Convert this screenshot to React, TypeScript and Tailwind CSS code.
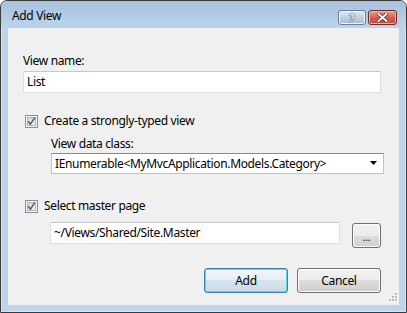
import React from "react";

const font = { fontFamily: '"Noto Sans", "Open Sans", sans-serif' };

function CheckBox() {
  return (
    <svg width="13" height="13" viewBox="0 0 13 13" className="shrink-0">
      <defs>
        <linearGradient id="cbg" x1="0" y1="0" x2="1" y2="1">
          <stop offset="0" stopColor="#d4d4d4" />
          <stop offset="1" stopColor="#f8f8f8" />
        </linearGradient>
      </defs>
      <rect x="0.5" y="0.5" width="12" height="12" fill="#f4f4f4" stroke="#8e8f8f" />
      <rect x="2.5" y="2.5" width="8" height="8" fill="url(#cbg)" stroke="#b5b5b5" />
      <path d="M3.2 6.2 L5.4 9.2 L9.8 2.6" fill="none" stroke="#4a5f97" strokeWidth="1.6" />
    </svg>
  );
}

export default function App() {
  return (
    <div className="w-[407px] h-[313px] bg-white tracking-[-0.35px]" style={font}>
      <div className="w-[407px] h-[313px] flex flex-col border border-[#3a3a3a] rounded-t-[7px] bg-[#bcd4ec] shadow-[inset_0_0_0_1px_#d8e6f4] overflow-hidden">
        <div className="h-[27px] shrink-0 flex items-start bg-gradient-to-b from-[#a7c0dd] to-[#bcd4ec] px-[11px]">
          <span className="mt-[7px] text-[12px] leading-[16px] text-black">Add View</span>
          <div className="ml-auto mt-[9px] mr-[-2px] flex gap-[2px]">
            <div className="w-[28px] h-[15px] rounded-[3px] border border-[#6d7f98] bg-gradient-to-b from-[#dde8f4] to-[#a5bad4] flex items-center justify-center shadow-[inset_0_0_0_1px_#eef4fa]">
              <span className="text-[11px] leading-[11px] font-bold text-white [text-shadow:0_0_1px_#2a3a50,0_0_1px_#2a3a50,0_0_1px_#2a3a50]">?</span>
            </div>
            <div className="w-[29px] h-[15px] rounded-[3px] border border-[#6e2d2a] bg-gradient-to-b from-[#e6a294] via-[#cf6152] to-[#c04a3e] flex items-center justify-center shadow-[inset_0_0_0_1px_#eeb2a6]">
              <svg width="11" height="9" viewBox="0 0 11 9">
                <path d="M1.5 1 L9.5 8 M9.5 1 L1.5 8" stroke="#5a2220" strokeWidth="3.6" strokeLinecap="round" />
                <path d="M1.5 1 L9.5 8 M9.5 1 L1.5 8" stroke="#ffffff" strokeWidth="2" strokeLinecap="round" />
              </svg>
            </div>
          </div>
        </div>
        <div className="mx-[7px] h-[277px] shrink-0 bg-[#f0f0f0] relative text-[12px] leading-[16px] text-black">
          <div className="flex flex-col pl-[15px] pt-[25px]">
            <div className="h-[16px]">View name:</div>
            <div className="mt-[2px] w-[358px] h-[22px] bg-white border border-[#dadde2] border-t-[#c4c7cc] flex items-center pl-[3px]">List</div>
            <div className="mt-[20px] h-[16px] flex items-center gap-[6px] pl-[2px]">
              <CheckBox />
              <span>Create a strongly-typed view</span>
            </div>
            <div className="pl-[28px] flex flex-col">
              <div className="mt-[7px] h-[16px]">View data class:</div>
              <div className="mt-[1px] w-[333px] h-[21px] bg-white border border-[#a9c7e6] border-t-[#5b95c9] flex items-center pl-[3px] pr-[4px]">
                <span>IEnumerable&lt;MyMvcApplication.Models.Category&gt;</span>
                <svg width="8" height="5" viewBox="0 0 8 5" className="ml-auto mr-[1px]">
                  <path d="M0 0 H7 L3.5 4 Z" fill="#000" />
                </svg>
              </div>
            </div>
            <div className="mt-[24px] h-[16px] flex items-center gap-[6px] pl-[2px]">
              <CheckBox />
              <span>Select master page</span>
            </div>
            <div className="pl-[27px] mt-[8px] flex items-start">
              <div className="w-[290px] h-[22px] bg-white border border-[#dadde2] border-t-[#c4c7cc] flex items-center pl-[3px]">~/Views/Shared/Site.Master</div>
              <div className="ml-[12px] mt-[1px] w-[29px] h-[25px] rounded-[3px] border border-[#707070] bg-[linear-gradient(#f2f2f2_0%,#ebebeb_50%,#dddddd_50%,#cfcfcf_100%)] shadow-[inset_0_0_0_1px_#fbfbfb] flex items-end justify-center pb-[6px]">
                <span className="text-[10px] leading-[8px] tracking-normal">...</span>
              </div>
            </div>
            <div className="mt-[20px] flex gap-[9px] pl-[181px]">
              <div className="w-[84px] h-[25px] rounded-[3px] border border-[#3c7fb1] bg-[linear-gradient(#f1f7fb_0%,#e4eef5_50%,#d6e4ee_50%,#c8d9e6_100%)] shadow-[inset_0_0_0_1px_#5ad6fb] flex items-center justify-center">Add</div>
              <div className="w-[84px] h-[25px] rounded-[3px] border border-[#707070] bg-[linear-gradient(#f2f2f2_0%,#ebebeb_50%,#dddddd_50%,#cfcfcf_100%)] shadow-[inset_0_0_0_1px_#fbfbfb] flex items-center justify-center">Cancel</div>
            </div>
          </div>
          <svg width="11" height="11" viewBox="0 0 11 11" className="absolute right-[1px] bottom-[1px]">
            {[[8, 0], [8, 3], [5, 3], [8, 6], [5, 6], [2, 6]].map(([x, y], i) => (
              <g key={i}>
                <rect x={x + 1} y={y + 1} width="2" height="2" fill="#ffffff" />
                <rect x={x} y={y} width="2" height="2" fill="#b8b8b8" />
              </g>
            ))}
          </svg>
        </div>
      </div>
    </div>
  );
}
